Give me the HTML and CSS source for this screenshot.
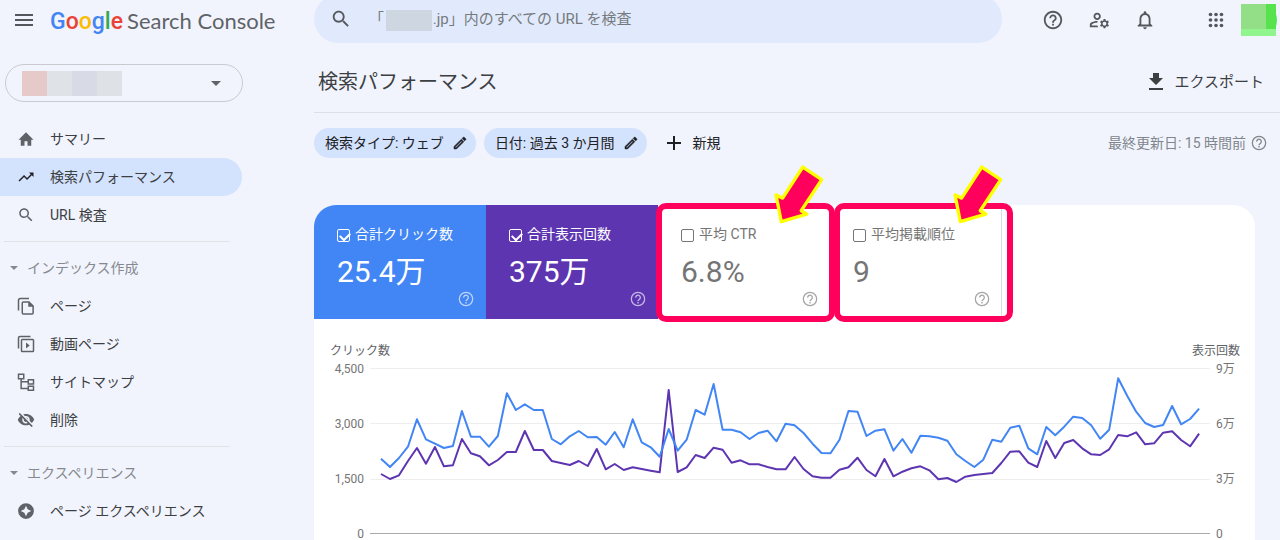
FILE: index.html
```html
<!DOCTYPE html>
<html lang="ja">
<head>
<meta charset="utf-8">
<meta name="viewport" content="width=device-width, initial-scale=1">
<title>検索パフォーマンス - Google Search Console</title>
<link rel="stylesheet" href="styles.css">
</head>
<body>
<svg class="sprite" aria-hidden="true">
  <symbol id="i-help" viewBox="0 0 24 24"><path d="M11 18h2v-2h-2v2zm1-16C6.48 2 2 6.48 2 12s4.48 10 10 10 10-4.48 10-10S17.52 2 12 2zm0 18c-4.41 0-8-3.59-8-8s3.59-8 8-8 8 3.59 8 8-3.59 8-8 8zm0-14c-2.21 0-4 1.79-4 4h2c0-1.1.9-2 2-2s2 .9 2 2c0 2-3 1.75-3 5h2c0-2.25 3-2.5 3-5 0-2.21-1.79-4-4-4z"/></symbol>
  <symbol id="i-help-thin" viewBox="0 0 24 24"><g fill="none" stroke="currentColor" stroke-width="1.900"><circle cx="12" cy="12" r="10"/><path d="M8.500 10a3.500 3.500 0 1 1 5.800 2.400c-1.400 1.200-2.300 1.500-2.300 3"/></g><path d="M11 16.600h2v2h-2z"/></symbol>
  <symbol id="i-search" viewBox="0 0 24 24"><path d="M15.500 14h-.79l-.28-.27C15.410 12.590 16 11.110 16 9.500 16 5.910 13.090 3 9.500 3S3 5.910 3 9.500 5.910 16 9.500 16c1.610 0 3.090-.59 4.230-1.570l.27.28v.79l5 4.990L20.490 19l-4.990-5zm-6 0C7.010 14 5 11.990 5 9.500S7.010 5 9.500 5 14 7.010 14 9.500 11.990 14 9.500 14z"/></symbol>
  <symbol id="i-edit" viewBox="0 0 24 24"><path stroke="currentColor" stroke-width=".7" d="M14.060 9.020l.92.92L5.920 19H5v-.92l9.060-9.060M17.660 3c-.25 0-.51.1-.7.29l-1.830 1.830 3.750 3.750 1.830-1.830c.39-.39.39-1.020 0-1.410l-2.340-2.340c-.2-.2-.45-.29-.71-.29zm-3.600 3.190L3 17.250V21h3.750L17.810 9.940l-3.750-3.750z"/></symbol>
  <symbol id="i-arrow" viewBox="400 10 160 190"><path d="M490 22 547 60 485 154 502 164 425 187 409 106 429 116z" fill="#ff005c" stroke="#ffff00" stroke-width="10" stroke-linejoin="round"/></symbol>
</svg>

<header class="topbar">
  <div class="brand">
    <button class="icon-btn" aria-label="メニュー"><svg class="menu-icon" viewBox="0 0 18 12"><path d="M0 0h18v2H0zM0 5h18v2H0zM0 10h18v2H0z"/></svg></button>
    <a class="logo" href="#"><span class="google"><span class="c-blue">G</span><span class="c-red">o</span><span class="c-yellow">o</span><span class="c-blue">g</span><span class="c-green">l</span><span class="c-red">e</span></span><span class="product">Search Console</span></a>
  </div>
  <form class="search" role="search">
    <svg class="search-icon"><use href="#i-search"/></svg>
    <input class="search-input" type="text" aria-label="URL を検査" placeholder="「　　　 .jp」内のすべての URL を検査">
    <span class="search-mask"></span>
  </form>
  <div class="tools">
    <button class="icon-btn" aria-label="ヘルプ"><svg class="tool-icon"><use href="#i-help"/></svg></button>
    <button class="icon-btn" aria-label="ユーザー設定"><svg class="tool-icon" viewBox="0 0 24 24"><path d="M4 18v-.65c0-.34.16-.66.41-.81C6.100 15.530 8.030 15 10 15c.03 0 .05 0 .08.01.1-.7.3-1.370.59-1.980-.22-.02-.44-.03-.67-.03-2.420 0-4.680.67-6.610 1.820-.88.52-1.390 1.500-1.390 2.530V20h9.260c-.42-.6-.75-1.280-.97-2H4zM10 12c2.210 0 4-1.790 4-4s-1.790-4-4-4-4 1.790-4 4 1.790 4 4 4zm0-6c1.100 0 2 .9 2 2s-.9 2-2 2-2-.9-2-2 .9-2 2-2zM21.750 16c0-.22-.03-.42-.06-.63l1.140-1.010-1-1.730-1.450.49c-.32-.27-.68-.48-1.080-.63L19 11h-2l-.3 1.490c-.4.15-.76.36-1.080.63l-1.450-.49-1 1.730 1.140 1.010c-.03.21-.06.41-.06.63s.03.42.06.63l-1.140 1.010 1 1.730 1.450-.49c.32.27.68.48 1.080.63L17 21h2l.3-1.490c.4-.15.76-.36 1.080-.63l1.450.49 1-1.730-1.140-1.010c.03-.21.06-.41.06-.63zM18 18c-1.100 0-2-.9-2-2s.9-2 2-2 2 .9 2 2-.9 2-2 2z"/></svg></button>
    <button class="icon-btn" aria-label="通知"><svg class="tool-icon" viewBox="0 0 24 24"><path d="M12 22c1.100 0 2-.9 2-2h-4c0 1.100.9 2 2 2zm6-6v-5c0-3.070-1.630-5.640-4.500-6.320V4c0-.83-.67-1.500-1.500-1.500s-1.500.67-1.500 1.500v.68C7.640 5.360 6 7.920 6 11v5l-2 2v1h16v-1l-2-2zm-2 1H8v-6c0-2.480 1.510-4.500 4-4.500s4 2.020 4 4.500v6z"/></svg></button>
    <button class="icon-btn apps" aria-label="アプリ"><svg class="tool-icon" viewBox="0 0 24 24"><circle cx="6" cy="6" r="2"/><circle cx="12" cy="6" r="2"/><circle cx="18" cy="6" r="2"/><circle cx="6" cy="12" r="2"/><circle cx="12" cy="12" r="2"/><circle cx="18" cy="12" r="2"/><circle cx="6" cy="18" r="2"/><circle cx="12" cy="18" r="2"/><circle cx="18" cy="18" r="2"/></svg></button>
    <button class="icon-btn" aria-label="アカウント"><svg class="avatar" viewBox="0 0 36 32"><circle cx="18" cy="16" r="18" fill="#55e34b"/><path fill="#90f58c" d="M0 0h35v32H0z"/><path fill="#93df87" d="M0 0h25v25H0z"/><path fill="#57e34d" d="M25 0h10v25H25z"/></svg></button>
  </div>
</header>

<div class="layout">
  <nav class="sidebar" aria-label="メイン">
    <button class="property" aria-label="プロパティを選択"><span class="property-mask"></span><svg class="caret" viewBox="0 0 10 5"><path d="M0 0h10L5 5z"/></svg></button>
    <a class="nav-item" href="#"><svg viewBox="0 0 24 24"><path d="M10 21v-6h4v6h5v-8h3L12 3 2 13h3v8z"/></svg>サマリー</a>
    <a class="nav-item active" href="#" aria-current="page"><svg viewBox="0 0 24 24"><path d="M16 6l2.290 2.290-4.880 4.880-4-4L2 16.590 3.410 18l6-6 4 4 6.300-6.290L22 12V6z"/></svg>検索パフォーマンス</a>
    <a class="nav-item" href="#"><svg><use href="#i-search"/></svg>URL 検査</a>
    <hr class="nav-rule">
    <button class="nav-group"><svg viewBox="0 0 10 5"><path d="M0 0h10L5 5z"/></svg>インデックス作成</button>
    <a class="nav-item" href="#"><svg viewBox="0 0 24 24" class="line"><path d="M16 2H4.500Q2 2 2 4.500V18"/><path d="M8.500 6.500H16l5.500 5.500v9q0 1.500-1.500 1.500H8.500Q7 22.500 7 21V8q0-1.500 1.500-1.500z"/><path class="solid" d="M15 6v7h7z"/></svg>ページ</a>
    <a class="nav-item" href="#"><svg viewBox="0 0 24 24" class="line"><path d="M18 2H4Q2 2 2 4v14"/><rect x="6" y="6" width="16" height="16" rx="1"/><path class="solid" d="M12 10v8l5-4z"/></svg>動画ページ</a>
    <a class="nav-item" href="#"><svg viewBox="0 0 24 24" class="line"><path d="M2 1.500h7v6H2zM15 9h7v5.500h-7zM15 17.500h7V23h-7zM5.500 8v12.500H15M5.500 11.500H15"/></svg>サイトマップ</a>
    <a class="nav-item" href="#"><svg viewBox="0 0 24 24"><path d="M12 6.500c2.760 0 5 2.240 5 5 0 .51-.1 1-.24 1.460l3.060 3.060c1.390-1.230 2.490-2.770 3.180-4.530C21.270 7.110 17 4 12 4c-1.270 0-2.490.2-3.640.57l2.170 2.170c.47-.14.96-.24 1.470-.24zM2.710 3.160c-.39.39-.39 1.020 0 1.410l1.970 1.970C3.060 7.830 1.770 9.530 1 11.500 2.730 15.890 7 19 12 19c1.520 0 2.970-.3 4.310-.82l2.720 2.720c.39.39 1.020.39 1.410 0s.39-1.020 0-1.410L4.130 3.160c-.39-.39-1.030-.39-1.420 0zM12 16.500c-2.760 0-5-2.240-5-5 0-.77.18-1.500.49-2.140l1.570 1.570c-.03.18-.06.37-.06.57 0 1.660 1.340 3 3 3 .2 0 .38-.03.57-.07L14.140 16c-.65.32-1.370.5-2.140.5zm2.970-5.330c-.15-1.400-1.250-2.490-2.640-2.640l2.640 2.640z"/></svg>削除</a>
    <hr class="nav-rule">
    <button class="nav-group"><svg viewBox="0 0 10 5"><path d="M0 0h10L5 5z"/></svg>エクスペリエンス</button>
    <a class="nav-item" href="#"><svg viewBox="0 0 24 24"><path fill-rule="evenodd" d="M12 1.500a10.500 10.500 0 1 0 0 21 10.500 10.500 0 0 0 0-21zM12 5l2.200 4.800L19 12l-4.800 2.200L12 19l-2.200-4.800L5 12l4.800-2.200z"/></svg>ページ エクスペリエンス</a>
  </nav>

  <main class="main">
    <div class="title-row">
      <h1 class="title">検索パフォーマンス</h1>
      <button class="export"><svg viewBox="0 0 14 17"><path d="M4 0h6v5h4l-7 7-7-7h4zM0 15h14v2H0z"/></svg>エクスポート</button>
    </div>
    <div class="filters">
      <button class="chip">検索タイプ: ウェブ<svg><use href="#i-edit"/></svg></button>
      <button class="chip">日付: 過去 3 か月間<svg><use href="#i-edit"/></svg></button>
      <button class="add"><svg viewBox="0 0 14 14"><path d="M6 0h2v6h6v2H8v6H6V8H0V6h6z"/></svg>新規</button>
      <p class="updated">最終更新日: 15 時間前<svg><use href="#i-help-thin"/></svg></p>
    </div>

    <section class="card">
      <div class="tiles">
        <div class="tile clicks">
          <label class="tile-label"><input type="checkbox" checked>合計クリック数</label>
          <div class="tile-value">25.4万</div>
          <svg class="tile-help"><use href="#i-help-thin"/></svg>
        </div>
        <div class="tile impressions">
          <label class="tile-label"><input type="checkbox" checked>合計表示回数</label>
          <div class="tile-value">375万</div>
          <svg class="tile-help"><use href="#i-help-thin"/></svg>
        </div>
        <div class="tile">
          <label class="tile-label"><input type="checkbox">平均 CTR</label>
          <div class="tile-value">6.8%</div>
          <svg class="tile-help"><use href="#i-help-thin"/></svg>
          <span class="mark mark-ctr"></span>
          <svg class="arrow arrow-ctr"><use href="#i-arrow"/></svg>
        </div>
        <div class="tile">
          <label class="tile-label"><input type="checkbox">平均掲載順位</label>
          <div class="tile-value">9</div>
          <svg class="tile-help"><use href="#i-help-thin"/></svg>
          <span class="mark mark-rank"></span>
          <svg class="arrow arrow-rank"><use href="#i-arrow"/></svg>
        </div>
      </div>

      <div class="chart">
        <div class="axis-titles"><span>クリック数</span><span>表示回数</span></div>
        <div class="plot">
          <div class="axis left"><span>4,500</span><span>3,000</span><span>1,500</span><span>0</span></div>
          <svg class="lines" viewBox="370 361 840 181" preserveAspectRatio="none" role="img" aria-label="クリック数と表示回数の推移">
            <path class="grid" d="M370 368.500h840M370 423.500h840M370 479.500h840"/>
            <path class="base" d="M370 533.500h840"/>
            <g transform="translate(381 0) scale(8.990 1)">
              <polyline class="series-purple" points="0,474 1,479 2,475.300 3,461 4,448 5,463.700 6,447 7,466.300 8,465.300 9,439 10,453.300 11,456.300 12,465.300 13,460 14,452 15,452 16,431 17,450 18,450 19,461 20,463 21,465 22,461 23,466 24,449 25,469.300 26,464 27,470 28,467.300 29,469 30,470.700 31,472.300 32,390 33,472 34,467.300 35,455 36,458 37,447.700 38,449.700 39,462.700 40,460.300 41,464.300 42,464.300 43,467 44,469.300 45,469.300 46,457 47,469 48,476.300 49,477.700 50,477.700 51,469.700 52,467.300 53,457.700 54,470 55,476.300 56,459 57,476.300 58,471.700 59,468.300 60,466.300 61,470.300 62,479.300 63,478 64,482 65,476.700 66,475 67,474 68,473 69,463 70,451.700 71,451.300 72,462.700 73,467 74,441 75,458 76,443 77,440 78,448.300 79,454.300 80,455 81,449.300 82,435 83,436.300 84,432.300 85,444.300 86,443.300 87,432.700 88,431.300 89,440 90,446.300 91,433.700"/>
              <polyline class="series-blue" points="0,458.700 1,467 2,458 3,446.700 4,419.300 5,439.300 6,443.700 7,448 8,446 9,411 10,436.700 11,436.700 12,446.700 13,436 14,393.300 15,410 16,404.300 17,410 18,410 19,439 20,444.300 21,436.300 22,431 23,437.300 24,437 25,444.700 26,432 27,447.300 28,419.300 29,442.300 30,447.300 31,456.700 32,429 33,450.700 34,439.700 35,410 36,414.700 37,384 38,429.700 39,429.700 40,432.300 41,439 42,433 43,430.700 44,441.300 45,423.700 46,425.300 47,433 48,443.700 49,453 50,453.300 51,439.700 52,411 53,411.700 54,436 55,430.700 56,429.300 57,450.700 58,439 59,452.700 60,435.700 61,436.300 62,437.700 63,440.700 64,454.300 65,461 66,467 67,459.700 68,439.700 69,441.700 70,427.700 71,425.700 72,448.300 73,454.300 74,427 75,435.300 76,426.700 77,416.700 78,418 79,425.300 80,438.700 81,429.700 82,378.300 83,395.700 84,411.700 85,423 86,427 87,425 88,406 89,424.300 90,419 91,408.700"/>
            </g>
          </svg>
          <div class="axis right"><span>9万</span><span>6万</span><span>3万</span><span>0</span></div>
        </div>
      </div>
    </section>
  </main>
</div>
</body>
</html>
```

FILE: styles.css
```css
* {
  box-sizing: border-box;
}

html {
  overflow: hidden;
}

body {
  margin: 0;
  min-height: 100vh;
  background: #f1f4fd;
  color: #3c4043;
  font: 14px/20px Roboto, "Noto Sans CJK JP", sans-serif;
}

button {
  border: 0;
  padding: 0;
  background: none;
  color: inherit;
  font: inherit;
  cursor: pointer;
}

a {
  color: inherit;
  text-decoration: none;
}

svg {
  display: block;
  flex: none;
  fill: currentColor;
}

.sprite {
  position: absolute;
  width: 0;
  height: 0;
}

/* Top bar */
.topbar {
  display: flex;
  align-items: center;
  height: 43px;
  color: #54585c;
}

.brand {
  display: flex;
  flex: none;
  align-items: center;
  gap: 17px;
  width: 314px;
  padding: 0 0 3px 15px;
}

.menu-icon {
  width: 18px;
  height: 12px;
}

.logo {
  display: flex;
  align-items: baseline;
  gap: 4px;
  padding-top: 3px;
  line-height: 28px;
  white-space: nowrap;
}

.google {
  font-size: 23px;
  font-weight: 500;
}

.product {
  color: #5f6368;
  font-family: Lato, sans-serif;
  font-size: 22px;
}

.c-blue { color: #4285f4; }
.c-red { color: #ea4335; }
.c-yellow { color: #fbbc05; }
.c-green { color: #34a853; }

.search {
  position: relative;
  display: flex;
  flex: 1;
  align-items: center;
  gap: 17px;
  height: 48px;
  margin-top: -5px;
  padding-left: 16px;
  border-radius: 24px;
  background: #e1eafc;
}

.search-icon {
  width: 22px;
  height: 22px;
}

.search-input {
  flex: 1;
  min-width: 0;
  border: 0;
  padding: 0;
  outline: 0;
  background: none;
  color: #3c4043;
  font: inherit;
  font-size: 15px;
}

.search-input::placeholder {
  color: #767a7f;
  opacity: 1;
}

.search-mask {
  position: absolute;
  left: 72px;
  top: 15px;
  width: 46px;
  height: 21px;
  background: #ced6e2;
}

.tools {
  display: flex;
  flex: none;
  align-items: center;
  gap: 24px;
  padding: 0 3px 3px 40px;
}

.tool-icon {
  width: 22px;
  height: 22px;
}

.apps {
  margin: 0 -10px 0 25px;
}

.avatar {
  width: 36px;
  height: 32px;
}

/* Side navigation */
.layout {
  display: flex;
}

.sidebar {
  flex: none;
  width: 314px;
  padding: 21px 72px 0 0;
}

.property {
  display: flex;
  align-items: center;
  justify-content: space-between;
  width: 238px;
  height: 38px;
  margin: 0 0 18px 5px;
  padding: 0 21px 0 16px;
  border: 1px solid #c9cbd0;
  border-radius: 19px;
  color: #5f6368;
}

.property-mask {
  width: 100px;
  height: 25px;
  background: linear-gradient(90deg, #e6caca 25%, #dfe2e7 25% 50%, #d8dbe6 50% 75%, #dee1e6 75%);
}

.caret {
  width: 10px;
  height: 5px;
}

.nav-item {
  display: flex;
  align-items: center;
  gap: 15px;
  height: 38px;
  padding-left: 17px;
  border-radius: 0 19px 19px 0;
}

.nav-item svg {
  width: 18px;
  height: 18px;
  color: #5f6368;
}

.nav-item .line {
  fill: none;
  stroke: currentColor;
  stroke-width: 2;
}

.nav-item .solid {
  fill: currentColor;
  stroke: none;
}

.nav-item.active {
  background: #d3e2fd;
}

.nav-item.active svg {
  color: #202124;
}

.nav-rule {
  height: 1px;
  margin: 7px 12px 7px 4px;
  border: 0;
  background: #e0e2e6;
}

.nav-group {
  display: flex;
  align-items: center;
  gap: 9px;
  width: 100%;
  height: 38px;
  padding-left: 10px;
  color: #85898e;
}

.nav-group svg {
  width: 8px;
  height: 4px;
}

/* Page heading */
.main {
  flex: 1;
  min-width: 0;
}

.title-row {
  display: flex;
  align-items: center;
  justify-content: space-between;
  height: 70px;
  padding: 8px 16px 0 4px;
  border-bottom: 1px solid #dcdfe4;
}

.title {
  margin: 0;
  font-size: 20px;
  font-weight: 400;
  line-height: 28px;
}

.export {
  display: flex;
  align-items: center;
  gap: 11px;
  font-size: 15px;
}

.export svg {
  width: 14px;
  height: 17px;
}

.filters {
  display: flex;
  align-items: center;
  gap: 8px;
  padding: 15px 13px 0 0;
}

.chip {
  display: flex;
  align-items: center;
  gap: 8px;
  height: 30px;
  padding: 0 8px 0 11px;
  border-radius: 15px;
  background: #d3e2fd;
  color: #202124;
}

.chip svg {
  width: 16px;
  height: 16px;
}

.add {
  display: flex;
  align-items: center;
  gap: 12px;
  margin-left: 12px;
  color: #202124;
}

.add svg {
  width: 14px;
  height: 14px;
}

.updated {
  display: flex;
  align-items: center;
  gap: 5px;
  margin: 0 0 0 auto;
  color: #80868b;
}

.updated svg {
  width: 16px;
  height: 16px;
}

/* Metrics card */
.card {
  margin: 47px 25px 0 0;
  border-radius: 22px 22px 0 0;
  background: #fff;
}

.tiles {
  display: flex;
}

.tile {
  position: relative;
  display: flex;
  flex-direction: column;
  width: 172px;
  height: 114px;
  padding: 19px 11px 12px 23px;
  border-right: 1px solid #dadce0;
  color: #757575;
}

.clicks,
.impressions {
  padding-right: 12px;
  border-right: 0;
  color: #fff;
}

.clicks {
  border-top-left-radius: 22px;
  background: #4285f4;
}

.impressions {
  background: #5e35b1;
}

.tile-label {
  display: flex;
  align-items: center;
  gap: 5px;
  white-space: nowrap;
}

.tile-label input {
  appearance: none;
  position: relative;
  width: 13px;
  height: 13px;
  margin: 3px 0 0;
  border: 1px solid;
  border-radius: 2px;
  color: inherit;
}

.tile-label input:checked::after {
  content: "";
  position: absolute;
  left: 2px;
  top: 2px;
  width: 8px;
  height: 5px;
  border: solid;
  border-width: 0 0 2px 2px;
  transform: rotate(-45deg);
}

.tile-value {
  margin-top: 10px;
  font-size: 30px;
  line-height: 36px;
}

.tile-help {
  align-self: flex-end;
  width: 16px;
  height: 16px;
  margin-top: auto;
  opacity: 0.65;
}

/* Callouts laid over the tiles */
.mark {
  position: absolute;
  z-index: 1;
  top: -2px;
  bottom: -3px;
  width: 179px;
  border: 6px solid #ff005c;
  border-radius: 10px;
  pointer-events: none;
}

.mark-ctr {
  left: -2px;
}

.mark-rank {
  left: 4px;
}

.arrow {
  position: absolute;
  z-index: 2;
  top: -42px;
  width: 53px;
  height: 63px;
}

.arrow-ctr {
  left: 115px;
}

.arrow-rank {
  left: 122px;
}

/* Chart */
.chart {
  padding: 23px 15px 0 16px;
}

.axis-titles {
  display: flex;
  justify-content: space-between;
  color: #5f6368;
  font-size: 12px;
  line-height: 18px;
}

.plot {
  display: flex;
  gap: 6px;
  margin-top: 1px;
}

.axis {
  display: flex;
  flex: none;
  flex-direction: column;
  justify-content: space-between;
  height: 181px;
  color: #757575;
  font-size: 12px;
  line-height: 16px;
}

.left {
  width: 34px;
  text-align: right;
}

.right {
  width: 24px;
}

.lines {
  flex: 1;
  min-width: 0;
  height: 181px;
  fill: none;
}

.lines path,
.lines polyline {
  vector-effect: non-scaling-stroke;
}

.grid {
  stroke: #eeeeee;
}

.base {
  stroke: #aaaaaa;
}

.series-blue,
.series-purple {
  stroke-width: 2;
  stroke-linejoin: round;
}

.series-blue {
  stroke: #4285f4;
}

.series-purple {
  stroke: #5e35b1;
}
```
